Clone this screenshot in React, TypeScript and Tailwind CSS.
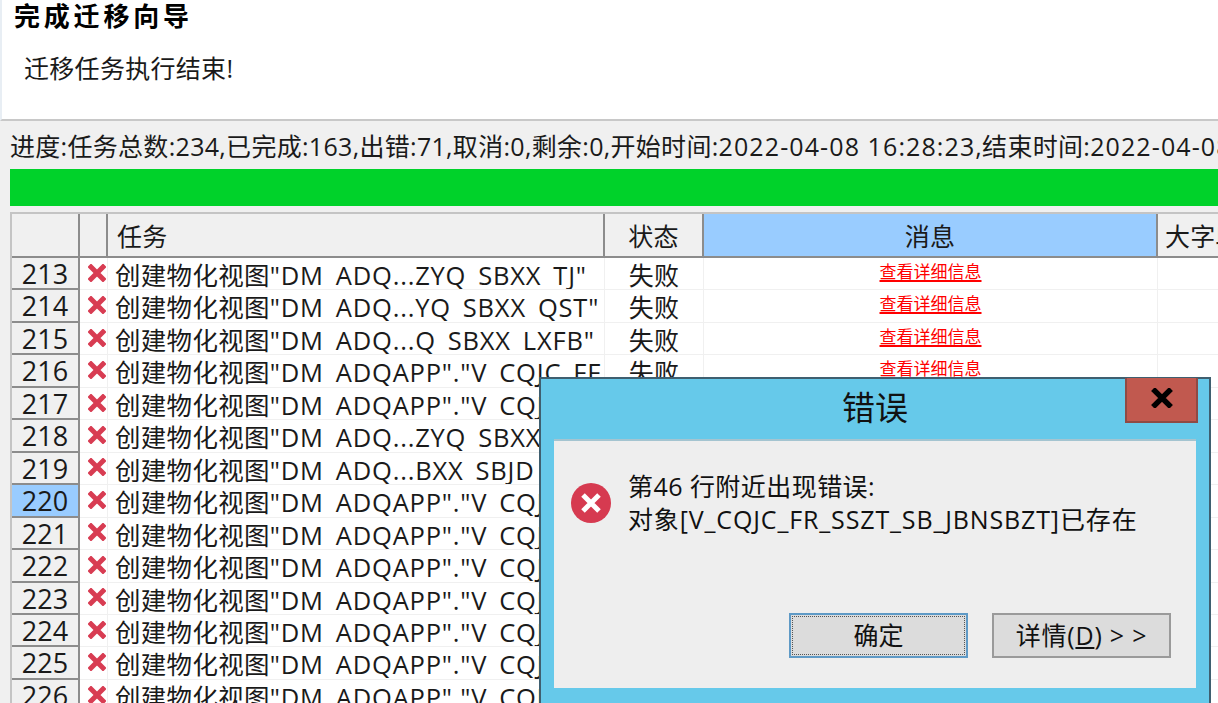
import React from 'react';

const rows = [
  { no: 213, task: '"DM_ADQ...ZYQ_SBXX_TJ"' },
  { no: 214, task: '"DM_ADQ...YQ_SBXX_QST"' },
  { no: 215, task: '"DM_ADQ...Q_SBXX_LXFB"' },
  { no: 216, task: '"DM_ADQAPP"."V_CQJC_FF' },
  { no: 217, task: '"DM_ADQAPP"."V_CQJC_FF' },
  { no: 218, task: '"DM_ADQ...ZYQ_SBXX_QST"' },
  { no: 219, task: '"DM_ADQ...BXX_SBJD_TJ"' },
  { no: 220, task: '"DM_ADQAPP"."V_CQJC_FF' },
  { no: 221, task: '"DM_ADQAPP"."V_CQJC_FF' },
  { no: 222, task: '"DM_ADQAPP"."V_CQJC_FF' },
  { no: 223, task: '"DM_ADQAPP"."V_CQJC_FF' },
  { no: 224, task: '"DM_ADQAPP"."V_CQJC_FF' },
  { no: 225, task: '"DM_ADQAPP"."V_CQJC_FF' },
  { no: 226, task: '"DM_ADQAPP"."V_CQJC_FF' },
];

// underscores get clipped by the row height in the original grid
function ClippedText({ text }: { text: string }) {
  return (
    <>
      {text.split(/(_)/).map((part, i) =>
        part === '_' ? (
          <span key={i} className="text-transparent">_</span>
        ) : (
          <span key={i}>{part}</span>
        ),
      )}
    </>
  );
}

function FailIcon() {
  return (
    <svg width="18" height="18" viewBox="0 0 18 18" className="ml-[8px] mt-[-2px]">
      <path d="M3 3L15 15M15 3L3 15" stroke="#d83c52" strokeWidth="5" strokeLinecap="square" fill="none" />
    </svg>
  );
}

function Row({ no, task }: { no: number; task: string }) {
  return (
    <div className="flex h-[32.46px] shrink-0 leading-[32px]">
      <div
        className={`w-[68px] shrink-0 border-b-2 border-r-2 border-[#8c8c8c] text-center text-[27px] leading-[31px] tracking-normal ${
          no === 220 ? 'bg-[#99ccff]' : 'bg-[#f0f0f0]'
        }`}
      >
        {no}
      </div>
      <div className="flex w-[28px] shrink-0 items-center border-b border-r border-[#f0f0f0]">
        <FailIcon />
      </div>
      <div className="w-[497px] shrink-0 overflow-hidden whitespace-nowrap border-b border-r border-[#f0f0f0] pl-[7px] text-[25.5px] leading-[35px]">
        创建物化视图
        <span className="tracking-[0.8px]">
          <ClippedText text={task} />
        </span>
      </div>
      <div className="w-[99px] shrink-0 overflow-hidden border-b border-r border-[#f0f0f0] text-center leading-[35px]">失败</div>
      <div className="w-[454px] shrink-0 overflow-hidden border-b border-r border-[#f0f0f0] text-center text-[17px] leading-[28px] tracking-normal text-[#ff0000] underline decoration-[1.5px] underline-offset-2">
        查看详细信息
      </div>
      <div className="flex-1 border-b border-[#f0f0f0]" />
    </div>
  );
}

function ErrorDialog() {
  return (
    <div className="absolute left-[539px] top-[377px] flex h-[326px] w-[672px] flex-col border-2 border-b-0 border-[#3f5f70] bg-[#66c9ea] px-[13px] tracking-normal">
      <div className="relative flex h-[60px] shrink-0 items-center justify-center">
        <span className="mt-[-2px] text-[33px] text-[#111111]">错误</span>
        <button className="absolute right-[-2px] top-[-1px] flex h-[45px] w-[73px] items-center justify-center border-2 border-t-0 border-[#8f4a45] bg-[#c1594f]">
          <svg width="24" height="20" viewBox="0 0 24 20" className="mb-[3px]">
            <path d="M3 1L21 19M21 1L3 19" stroke="#000000" strokeWidth="5.4" fill="none" />
          </svg>
        </button>
      </div>
      <div className="flex h-[249px] shrink-0 flex-col border-t-2 border-[#a4c4d0] bg-[#eeeeee]">
        <div className="flex items-center pl-[17px] pt-[29px]">
          <svg width="40" height="40" viewBox="0 0 40 40" className="shrink-0">
            <circle cx="20" cy="20" r="20" fill="#d63a50" />
            <path d="M12 12L28 28M28 12L12 28" stroke="#ffffff" strokeWidth="5" fill="none" />
          </svg>
          <div className="ml-[17px] text-[25px] leading-[33px] text-[#111111]">
            <div className="tracking-[0.45px]">第46 行附近出现错误:</div>
            <div className="tracking-[0.86px]">对象[V_CQJC_FR_SSZT_SB_JBNSBZT]已存在</div>
          </div>
        </div>
        <div className="mt-auto flex justify-end gap-[24px] pb-[30px] pr-[25px]">
          <button className="h-[45px] w-[179px] border-2 border-[#5f9ac6] bg-[#dcdcdc] p-[1px] text-[25px] text-[#111111]">
            <span className="flex h-full items-center justify-center border border-dotted border-[#555555]">确定</span>
          </button>
          <button className="flex h-[45px] w-[179px] items-center justify-center whitespace-pre border-2 border-[#9a9a9a] bg-[#dcdcdc] text-[25px] tracking-[0.8px] text-[#111111]">
            详情(<span className="underline">D</span>) &gt; &gt;
          </button>
        </div>
      </div>
    </div>
  );
}

export default function App() {
  return (
    <div className="relative flex h-[703px] w-[1218px] flex-col overflow-hidden bg-[#f0f0f0] font-['Open_Sans','Noto_Sans_CJK_SC',sans-serif] text-[25px] tracking-[0.3px] text-[#1a1a1a]">
      <div className="h-[121px] shrink-0 border-b-2 border-l-2 border-[#c8c8c8] border-l-[#e8eef4] bg-white pl-[12px]">
        <h1 className="mt-[-2px] text-[26px] font-bold leading-[36px] tracking-[3.8px] text-black">完成迁移向导</h1>
        <p className="pl-[10px] pt-[17px] leading-[34px]">迁移任务执行结束!</p>
      </div>
      <div className="flex min-h-0 flex-1 flex-col pl-[10px]">
        <div className="h-[48px] shrink-0 overflow-hidden whitespace-nowrap pt-[8px] leading-[34px]">
          进度:任务总数:234,已完成:163,出错:71,取消:0,剩余:0,开始时间:
          <span className="tracking-[1.1px]">2022-04-08 16:28:23</span>
          ,结束时间:
          <span className="tracking-[1.1px]">2022-04-08 16:28:25</span>
        </div>
        <div className="h-[37px] shrink-0 bg-[#00d22a]" />
        <div className="mt-[6px] flex min-h-0 flex-1 flex-col overflow-hidden border-l-2 border-t-2 border-[#c4c4c4] bg-white">
          <div className="flex h-[44px] shrink-0 border-b-2 border-[#8c8c8c] bg-[#f0f0f0] leading-[45px]">
            <div className="w-[68px] shrink-0 border-r-2 border-[#8c8c8c]" />
            <div className="w-[28px] shrink-0 border-r-2 border-[#8c8c8c]" />
            <div className="w-[497px] shrink-0 border-r-2 border-[#8c8c8c] pl-[9px]">任务</div>
            <div className="w-[99px] shrink-0 border-r-2 border-[#8c8c8c] text-center">状态</div>
            <div className="w-[454px] shrink-0 border-r-2 border-[#8c8c8c] bg-[#99ccff] text-center">消息</div>
            <div className="flex-1 whitespace-nowrap pl-[7px]">大字段</div>
          </div>
          {rows.map(r => (
            <Row key={r.no} no={r.no} task={r.task} />
          ))}
        </div>
      </div>
      <ErrorDialog />
    </div>
  );
}
